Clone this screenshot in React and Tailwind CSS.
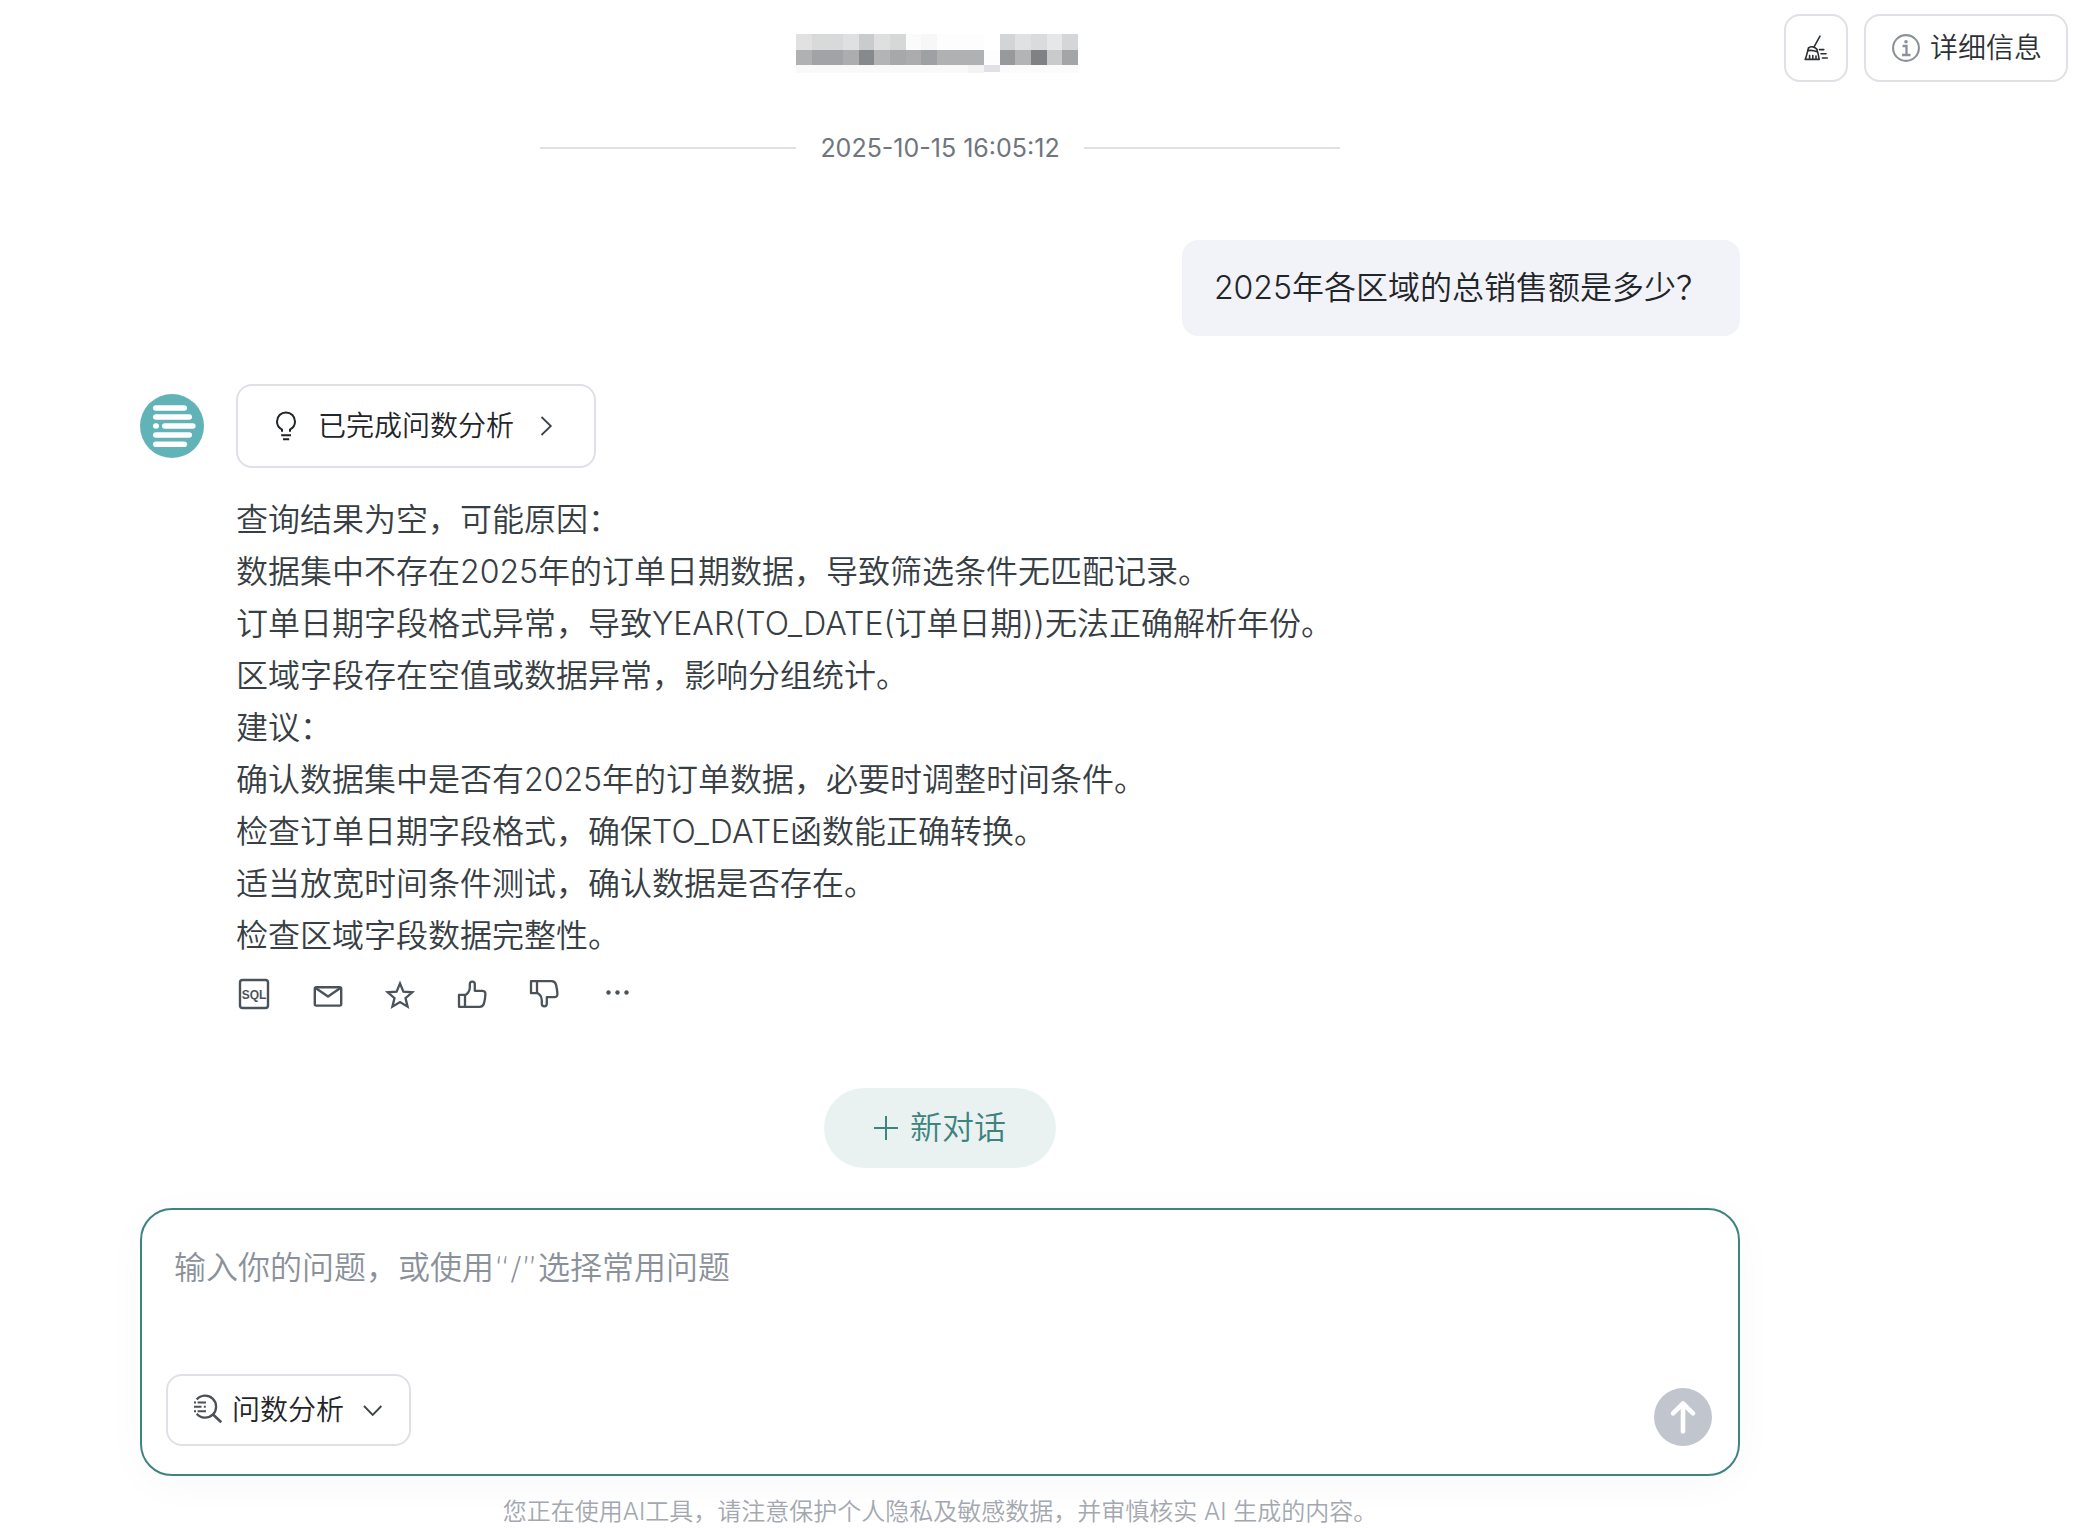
import { useState } from "react";

const ANSWER_LINES = [
  "查询结果为空，可能原因：",
  "数据集中不存在2025年的订单日期数据，导致筛选条件无匹配记录。",
  "订单日期字段格式异常，导致YEAR(TO_DATE(订单日期))无法正确解析年份。",
  "区域字段存在空值或数据异常，影响分组统计。",
  "建议：",
  "确认数据集中是否有2025年的订单数据，必要时调整时间条件。",
  "检查订单日期字段格式，确保TO_DATE函数能正确转换。",
  "适当放宽时间条件测试，确认数据是否存在。",
  "检查区域字段数据完整性。",
];

// masked session name, one shade per mosaic cell
const MASK_TOP = [
  "#e0e1e0", "#d8d9d9", "#d8d9d9", "#dfe0e2", "#c9cccd", "#dfdfe0",
  "#d6d8d7", "#fbfbfb", "#f7f7f8", "#fdfdfd", "#fdfdfd", "#fdfdfd",
  "#ffffff", "#d3d4d5", "#e0e1e3", "#d9dbdd", "#e6e7e8", "#d5d6d7",
];
const MASK_MIDDLE = [
  "#b0b1b2", "#a2a3a6", "#a2a3a6", "#acadaf", "#868a8d", "#b2b4b6",
  "#a6a8aa", "#abacae", "#9da1a3", "#b0b1b2", "#b0b1b2", "#b0b1b2",
  "#fdfdfd", "#97999b", "#b2b4b6", "#7f8185", "#c8cacc", "#a3a5a7",
];

const MaskedTitle = () => (
  <svg width="282" height="39" viewBox="0 0 846 117" shapeRendering="crispEdges">
    {MASK_TOP.map((fill, i) => (
      <rect key={i} x={i * 47} y="0" width="47" height="48" fill={fill} />
    ))}
    {MASK_MIDDLE.map((fill, i) => (
      <rect key={i} x={i * 47} y="48" width="47" height="46" fill={fill} />
    ))}
    <rect x="0" y="94" width="517" height="23" fill="#f9f9f9" />
    <rect x="517" y="94" width="47" height="23" fill="#f3f3f3" />
    <rect x="564" y="94" width="47" height="21" fill="#dfe1e4" />
    <rect x="611" y="94" width="235" height="23" fill="#fbfbfb" />
  </svg>
);

const BroomIcon = () => (
  <svg width="24" height="26" viewBox="0 0 24 26" fill="none" stroke="#2b3135" strokeWidth="1.6" strokeLinecap="round" strokeLinejoin="round">
    <path d="M16 1.2 10.2 11.6" />
    <path d="M4.6 12.9c2.4-1.9 6.2-1.3 8.2 1.4" />
    <path d="M4.6 12.9C3.4 16 3 20.4 1.2 24.4h14c-.6-3.6-1.2-7-2.4-10.1" />
    <path d="M3.8 15.6c3.2-.6 6.6 0 9.4 1.2" />
    <path d="M5.6 24v-3.4M8.8 24v-3.4M12 24v-3" />
    <path d="M15.4 14.6h4.4M17 18.8h5M18.4 23h4.8" />
  </svg>
);

const InfoIcon = () => (
  <svg width="28" height="28" viewBox="0 0 28 28" fill="none" stroke="#8b919a" strokeWidth="2.1">
    <circle cx="14" cy="14" r="12.9" />
    <path d="M10.5 12h4v9M10 21h8.5" strokeWidth="2.3" />
    <circle cx="14" cy="7.8" r="1.8" fill="#8b919a" stroke="none" />
  </svg>
);

const AvatarIcon = () => (
  <svg className="shrink-0" width="64" height="64" viewBox="0 0 64 64">
    <circle cx="32" cy="32" r="32" fill="#62b3b8" />
    <g stroke="#fff" strokeWidth="5.6" strokeLinecap="round">
      <path d="M15.8 14h28.4" />
      <path d="M15.8 23h33.4" />
      <path d="M15.8 32h.4" />
      <path d="M24.8 32h28" />
      <path d="M15.8 41h33.4" />
      <path d="M15.8 50.2h28.4" />
    </g>
  </svg>
);

const BulbIcon = () => (
  <svg width="32" height="32" viewBox="0 0 32 32" fill="none" stroke="#1f2529" strokeWidth="2">
    <path d="M12 21.8v-2.3c-3-1.7-5-4.7-5-8.1a9 9 0 0 1 18 0c0 3.4-2 6.4-5 8.1v2.3" />
    <path d="M11.2 25.2h9.8M13 29.2h6.2" />
  </svg>
);

const ChevronRightIcon = () => (
  <svg width="32" height="32" viewBox="0 0 32 32" fill="none" stroke="#3d4348" strokeWidth="1.8">
    <path d="m11.5 7 9.3 9-9.3 9" />
  </svg>
);

const ChevronDownIcon = () => (
  <svg className="ml-4 pointer-events-none" width="24" height="24" viewBox="0 0 24 24" fill="none" stroke="#3d4348" strokeWidth="1.8">
    <path d="m3 8 8.7 9 8.7-9" />
  </svg>
);

const SqlIcon = () => (
  <svg width="36" height="36" viewBox="0 0 36 36" fill="none">
    <rect x="4" y="4" width="28" height="28" rx="2.5" stroke="#4b535a" strokeWidth="2.4" />
    <text x="18" y="22.6" textAnchor="middle" fill="#4b535a" className="text-[12px] font-semibold font-['Liberation_Sans',sans-serif]">
      SQL
    </text>
  </svg>
);

const MailIcon = () => (
  <svg width="32" height="32" viewBox="0 0 32 32" fill="none" stroke="#4b535a" strokeWidth="2.4" strokeLinejoin="round">
    <rect x="2.8" y="9.2" width="26.4" height="18.4" rx="1.5" />
    <path d="m3.6 10 12.4 8.6L28.4 10" />
  </svg>
);

const StarIcon = () => (
  <svg width="32" height="32" viewBox="0 0 32 32" fill="none" stroke="#4b535a" strokeWidth="2.3">
    <path d="m16 5.4 3.4 8.2 8.9.7-6.8 5.8 2.1 8.6-7.6-4.6-7.6 4.6 2.1-8.6-6.8-5.8 8.9-.7z" />
  </svg>
);

const ThumbIcon = ({ down }) => (
  <svg className={down ? "-scale-y-100" : ""} width="32" height="32" viewBox="0 0 32 32" fill="none" stroke="#4b535a" strokeWidth="2.3" strokeLinejoin="round">
    <path d="M3 16.8h6v12H3z" />
    <path d="M9 17.2c2.8-1.4 4.6-4 4.8-7.4V6.2c0-3.4 5-3.4 5 0v6.6h7.4c2.2 0 3.4 1.4 3.2 3.6-.2 3.2-.6 6-1.4 9-.6 2.2-2.4 3.4-4.6 3.4H9" />
  </svg>
);

const DotsIcon = () => (
  <svg width="32" height="32" viewBox="0 0 32 32" fill="#4b535a">
    <circle cx="8.5" cy="14.5" r="2.2" />
    <circle cx="17.5" cy="14.5" r="2.2" />
    <circle cx="26.5" cy="14.5" r="2.2" />
  </svg>
);

const PlusIcon = () => (
  <svg width="24" height="24" viewBox="0 0 24 24" stroke="#3d837e" strokeWidth="2">
    <path d="M12 0v24M0 12h24" />
  </svg>
);

const SearchDataIcon = () => (
  <svg width="32" height="32" viewBox="0 0 32 32" fill="none" stroke="#4b5157" strokeWidth="2.3">
    <path d="M4.7 5.6A11 11 0 1 1 4.7 19.8" />
    <path d="m20.8 20.2 8.4 8" strokeWidth="2.6" />
    <path d="M2 8.4h2M5.6 8.4h8.4M2 12.8h7.5M11.8 12.8h2M2 17.2h2M5.6 17.2h8.4" strokeWidth="2" />
  </svg>
);

const SendIcon = () => (
  <svg width="58" height="58" viewBox="0 0 58 58" fill="none" stroke="#fff" strokeWidth="4.6" strokeLinecap="round" strokeLinejoin="round">
    <path d="M29 43.5V15.5M19 25.3l10-9.8 10 9.8" />
  </svg>
);

const ACTIONS = [
  { label: "SQL", icon: <SqlIcon /> },
  { label: "邮件", icon: <MailIcon /> },
  { label: "收藏", icon: <StarIcon /> },
  { label: "赞", icon: <ThumbIcon /> },
  { label: "踩", icon: <ThumbIcon down /> },
  { label: "更多", icon: <DotsIcon /> },
];

const Header = () => (
  <header className="flex items-center pt-3.5 pl-[90px] pr-3">
    <h1 className="flex-1 flex justify-center pt-2.5">
      <MaskedTitle />
    </h1>
    <div className="flex gap-4">
      <button
        type="button"
        aria-label="清空"
        className="w-16 h-[68px] flex items-center justify-center border-2 border-[#dfe1e7] rounded-2xl"
      >
        <BroomIcon />
      </button>
      <button
        type="button"
        className="h-[68px] pl-[26px] pr-6 flex items-center gap-2.5 border-2 border-[#dfe1e7] rounded-2xl text-[28px] leading-10 text-[#2b3135]"
      >
        <InfoIcon />
        详细信息
      </button>
    </div>
  </header>
);

const Composer = () => {
  const [question, setQuestion] = useState("");
  const [mode, setMode] = useState("analysis");

  return (
    <form
      onSubmit={(e) => e.preventDefault()}
      className="w-full mt-10 pt-[34px] pb-7 pl-6 pr-[26px] border-2 border-[#3d837e] rounded-[32px] shadow-[0_8px_40px_rgba(0,0,0,0.03)]"
    >
      <textarea
        rows={2}
        aria-label="输入你的问题"
        value={question}
        onChange={(e) => setQuestion(e.target.value)}
        placeholder="输入你的问题，或使用“/”选择常用问题"
        className="block w-full px-2 mb-[34px] resize-none outline-none font-['DejaVu_Sans','Noto_Sans_CJK_SC',sans-serif] text-[32px] leading-12 text-[#1f2529] placeholder:text-[#8b919b]"
      />
      <div className="flex items-end justify-between">
        <div className="h-[72px] px-6 flex items-center border-2 border-[#dfe1e7] rounded-2xl">
          <SearchDataIcon />
          <select
            aria-label="模式"
            value={mode}
            onChange={(e) => setMode(e.target.value)}
            className="ml-2 appearance-none outline-none text-[28px] leading-10 text-[#1f2529]"
          >
            <option value="analysis">问数分析</option>
          </select>
          <ChevronDownIcon />
        </div>
        <button type="submit" aria-label="发送" className="rounded-full bg-[#c1c6ce]">
          <SendIcon />
        </button>
      </div>
    </form>
  );
};

const App = () => {
  return (
    <div
      lang="zh-CN"
      className="min-h-screen flex flex-col bg-white font-[350] font-['Inter','Noto_Sans_CJK_SC',sans-serif]"
    >
      <Header />

      <main className="flex-1 flex flex-col pr-50">
        <div className="flex-1 w-full max-w-[1600px] mx-auto flex flex-col">
          <div className="w-1/2 mt-[50px] mx-auto flex items-center gap-6">
            <span className="flex-1 h-0.5 bg-[#dfe1e7]" />
            <time className="text-[25px] leading-8 font-normal text-[#6f767e]">
              2025-10-15 16:05:12
            </time>
            <span className="flex-1 h-0.5 bg-[#dfe1e7]" />
          </div>

          <p className="self-end mt-19 px-8 py-6 rounded-2xl bg-[#f2f3f8] text-[32px] leading-12 text-[#1f2529]">
            2025年各区域的总销售额是多少？
          </p>

          <section className="mt-12 flex gap-8">
            <div className="pt-2.5">
              <AvatarIcon />
            </div>
            <div>
              <button
                type="button"
                className="h-[84px] px-8 flex items-center gap-4 border-2 border-[#dfe1e7] rounded-2xl text-[28px] leading-10 text-[#1f2529]"
              >
                <BulbIcon />
                已完成问数分析
                <ChevronRightIcon />
              </button>

              <div className="mt-[26px] text-[32px] leading-13 text-[#373e44]">
                {ANSWER_LINES.map((line) => (
                  <p key={line}>{line}</p>
                ))}
              </div>

              <div className="mt-3.5 flex items-center gap-10">
                {ACTIONS.map(({ label, icon }) => (
                  <button key={label} type="button" aria-label={label}>
                    {icon}
                  </button>
                ))}
              </div>
            </div>
          </section>

          <div className="mt-auto pt-10 flex flex-col items-center">
            <button
              type="button"
              className="h-20 px-[50px] flex items-center gap-3 rounded-full bg-[#eaf2f1] text-[32px] leading-12 text-[#3d837e]"
            >
              <PlusIcon />
              新对话
            </button>
            <Composer />
            <p className="mt-5 text-2xl leading-8 text-[#a3a8b0]">
              您正在使用AI工具，请注意保护个人隐私及敏感数据，并审慎核实 AI 生成的内容。
            </p>
          </div>
        </div>
      </main>
    </div>
  );
};

export default App;
